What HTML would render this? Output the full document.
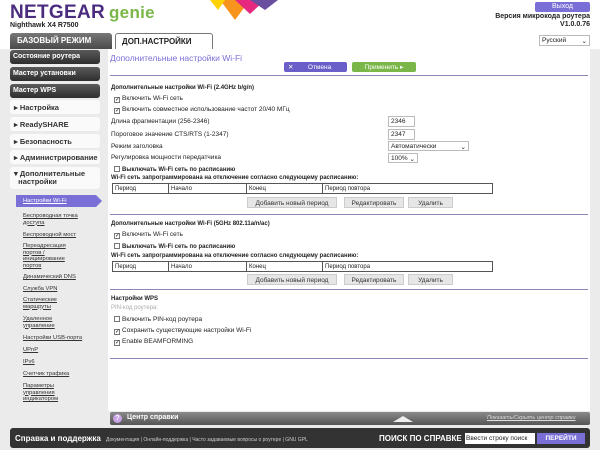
<!DOCTYPE html>
<html><head><meta charset="utf-8"><style>
*{margin:0;padding:0;box-sizing:border-box}
body{width:600px;height:450px;overflow:hidden;background:#ebebeb;font-family:"Liberation Sans",sans-serif;font-size:6.5px;color:#222;position:relative}
.a{position:absolute;white-space:nowrap}
.dk{position:absolute;left:10px;width:90px;height:14px;background:linear-gradient(#5a5a5a,#2e2e2e);border-radius:3px;color:#fff;font-weight:bold;font-size:7px;padding:3px 0 0 3px}
.lt{position:absolute;left:10px;width:90px;height:14px;background:#fafafa;border-radius:3px;color:#333;font-weight:bold;font-size:7.5px;padding:3px 0 0 4px}
.sub{position:absolute;left:23px;color:#333;font-size:5.8px;text-decoration:underline;line-height:6.6px}
.cb{display:inline-block;width:6px;height:6px;border:1px solid #777;background:#fff;vertical-align:-1px;margin-right:2px;font-size:6px;line-height:4px;text-align:center}
.sep{position:absolute;left:110px;width:478px;height:1px;background:#8b87b8}
.tb{position:absolute;left:112px;width:381px;height:11px;border:1px solid #555;display:flex}
.tb div{border-right:1px solid #555;padding:2px 0 0 2px;font-size:6px}
.btn{position:absolute;height:11px;background:#e6e6e6;border:1px solid #ccc;font-size:6.5px;text-align:center;padding-top:1.5px;color:#333}
.inp{position:absolute;background:#fff;border:1px solid #bbb;font-size:6.5px;padding:1px 2px;height:10px}
</style></head><body>
<div class="a" style="left:0;top:0;width:600px;height:49px;background:#fff"></div>
<div class="a" style="left:10px;top:2px;font-size:19px;font-weight:bold;color:#4b2c7e;letter-spacing:0.3px">NETGEAR<span style="color:#7ab648;font-size:17px;margin-left:4px">genie</span></div>
<svg class="a" style="left:210px;top:0" width="70" height="22"><polygon points="10,0 40,0 25,20" fill="#f7941d"/><polygon points="25,0 55,0 40,14" fill="#e6287f"/><polygon points="40,0 68,0 55,10" fill="#6a4ea0"/><polygon points="0,0 15,0 8,10" fill="#ffd200"/></svg>
<div class="a" style="left:10px;top:22px;font-size:7px;font-weight:bold">Nighthawk X4 R7500</div>
<div class="a" style="left:10px;top:33px;width:102px;height:16px;background:linear-gradient(#777,#4a4a4a);border-radius:3px 3px 0 0;color:#fff;font-weight:bold;font-size:8px;padding:3px 0 0 7px">БАЗОВЫЙ РЕЖИМ</div>
<div class="a" style="left:115px;top:33px;width:98px;height:16px;background:#fff;border:1px solid #777;border-bottom:none;border-radius:3px 3px 0 0;font-weight:bold;font-size:8px;padding:3px 0 0 6px">ДОП.НАСТРОЙКИ</div>
<div class="a" style="left:535px;top:2px;width:55px;height:10px;background:#7a6fd6;border-radius:2px;color:#fff;font-size:7px;text-align:center;padding-top:1px">Выход</div>
<div class="a" style="right:10px;top:13px;font-size:7px;font-weight:bold;text-align:right;line-height:8px">Версия микрокода роутера<br>V1.0.0.76</div>
<div class="a" style="left:539px;top:35px;width:51px;height:11px;background:#fff;border:1px solid #bbb;font-size:6.5px;padding:1px 2px">Русский<span style="float:right">⌄</span></div>

<div class="dk" style="top:50px">Состояние роутера</div>
<div class="dk" style="top:67px">Мастер установки</div>
<div class="dk" style="top:84px">Мастер WPS</div>
<div class="lt" style="top:100px">▸ Настройка</div>
<div class="lt" style="top:117px">▸ ReadySHARE</div>
<div class="lt" style="top:134px">▸ Безопасность</div>
<div class="lt" style="top:150px">▸ Администрирование</div>
<div class="lt" style="top:167px;height:22px;line-height:8px">▾ Дополнительные<br>&nbsp;&nbsp;настройки</div>
<svg class="a" style="left:16px;top:195px" width="86" height="12"><polygon points="0,0 80,0 86,6 80,12 0,12" fill="#7a6fd6"/></svg>
<div class="sub" style="top:198px;color:#fff">Настройки Wi-Fi</div>
<div class="sub" style="top:213px">Беспроводная точка<br>доступа</div>
<div class="sub" style="top:232px">Беспроводной мост</div>
<div class="sub" style="top:243px">Переадресация<br>портов /<br>инициирование<br>портов</div>
<div class="sub" style="top:274px">Динамический DNS</div>
<div class="sub" style="top:286px">Служба VPN</div>
<div class="sub" style="top:297px">Статические<br>маршруты</div>
<div class="sub" style="top:316px">Удаленное<br>управление</div>
<div class="sub" style="top:335px">Настройки USB-порта</div>
<div class="sub" style="top:347px">UPnP</div>
<div class="sub" style="top:359px">IPv6</div>
<div class="sub" style="top:371px">Счетчик трафика</div>
<div class="sub" style="top:383px">Параметры<br>управления<br>индикатором</div>

<div class="a" style="left:108px;top:49px;width:482px;height:362px;background:#fff"></div>
<div class="a" style="left:110px;top:53px;font-size:8.5px;color:#7a6fd6">Дополнительные настройки Wi-Fi</div>
<div class="a" style="left:284px;top:62px;width:63px;height:10px;background:#6a5fc8;border-radius:2px;color:#fff;font-size:6.5px;padding:1px 0 0 4px">✕ &nbsp;&nbsp;&nbsp;&nbsp;&nbsp;&nbsp;&nbsp;Отмена</div>
<div class="a" style="left:352px;top:62px;width:64px;height:10px;background:#7ab648;border-radius:2px;color:#fff;font-size:6.5px;text-align:center;padding-top:1px">Применить ▸</div>
<div class="sep" style="top:75px"></div>

<div class="a" style="left:111px;top:85px;font-weight:bold;font-size:6px">Дополнительные настройки Wi-Fi (2.4GHz b/g/n)</div>
<div class="a" style="left:114px;top:95px"><span class="cb">✓</span>Включить Wi-Fi сеть</div>
<div class="a" style="left:114px;top:106px"><span class="cb">✓</span>Включить совместное использование частот 20/40 МГц</div>
<div class="a" style="left:111px;top:118px">Длина фрагментации (256-2346)</div>
<div class="a" style="left:111px;top:131px">Пороговое значение CTS/RTS (1-2347)</div>
<div class="a" style="left:111px;top:143px">Режим заголовка</div>
<div class="a" style="left:111px;top:154px">Регулировка мощности передатчика</div>
<div class="inp" style="left:388px;top:116px;width:27px;height:11px">2346</div>
<div class="inp" style="left:388px;top:129px;width:27px;height:11px">2347</div>
<div class="inp" style="left:388px;top:141px;width:81px">Автоматически<span style="float:right">⌄</span></div>
<div class="inp" style="left:388px;top:153px;width:30px">100%<span style="float:right">⌄</span></div>
<div class="a" style="left:114px;top:166px;font-weight:bold;font-size:6px"><span class="cb"></span>Выключать Wi-Fi сеть по расписанию</div>
<div class="a" style="left:111px;top:175px;font-weight:bold;font-size:6px">Wi-Fi сеть запрограммирована на отключение согласно следующему расписанию:</div>
<div class="tb" style="top:183px"><div style="width:56px">Период</div><div style="width:78px">Начало</div><div style="width:76px">Конец</div><div style="flex:1;border:none">Период повтора</div></div>
<div class="btn" style="left:247px;top:197px;width:90px">Добавить новый период</div>
<div class="btn" style="left:344px;top:197px;width:60px">Редактировать</div>
<div class="btn" style="left:408px;top:197px;width:45px">Удалить</div>
<div class="sep" style="top:214px"></div>

<div class="a" style="left:111px;top:221px;font-weight:bold;font-size:6px">Дополнительные настройки Wi-Fi (5GHz 802.11a/n/ac)</div>
<div class="a" style="left:114px;top:231px"><span class="cb">✓</span>Включить Wi-Fi сеть</div>
<div class="a" style="left:114px;top:243px;font-weight:bold;font-size:6px"><span class="cb"></span>Выключать Wi-Fi сеть по расписанию</div>
<div class="a" style="left:111px;top:253px;font-weight:bold;font-size:6px">Wi-Fi сеть запрограммирована на отключение согласно следующему расписанию:</div>
<div class="tb" style="top:261px"><div style="width:56px">Период</div><div style="width:78px">Начало</div><div style="width:76px">Конец</div><div style="flex:1;border:none">Период повтора</div></div>
<div class="btn" style="left:247px;top:274px;width:90px">Добавить новый период</div>
<div class="btn" style="left:344px;top:274px;width:60px">Редактировать</div>
<div class="btn" style="left:408px;top:274px;width:45px">Удалить</div>
<div class="sep" style="top:289px"></div>

<div class="a" style="left:111px;top:296px;font-weight:bold;font-size:6px">Настройки WPS</div>
<div class="a" style="left:111px;top:305px;color:#aaa;font-size:6px">PIN-код роутера:</div>
<div class="a" style="left:114px;top:316px"><span class="cb"></span>Включить PIN-код роутера</div>
<div class="a" style="left:114px;top:327px"><span class="cb">✓</span>Сохранить существующие настройки Wi-Fi</div>
<div class="a" style="left:114px;top:338px"><span class="cb">✓</span>Enable BEAMFORMING</div>
<div class="sep" style="top:358px"></div>

<div class="a" style="left:110px;top:412px;width:480px;height:13px;background:linear-gradient(#8a8a8a,#555);border-radius:2px"></div>
<div class="a" style="left:113px;top:414px;width:9px;height:9px;border-radius:50%;background:#c9a3e6;color:#fff;font-size:7px;font-weight:bold;text-align:center;line-height:9px">?</div>
<div class="a" style="left:127px;top:414px;color:#fff;font-weight:bold;font-size:7px">Центр справки</div>
<svg class="a" style="left:393px;top:415px" width="20" height="8"><polygon points="0,7 10,1 20,7" fill="#eee"/></svg>
<div class="a" style="left:487px;top:415px;color:#ddd;font-size:5.5px;text-decoration:underline;font-style:italic">Показать/Скрыть центр справки</div>

<div class="a" style="left:10px;top:428px;width:580px;height:20px;background:#333;border-radius:3px"></div>
<div class="a" style="left:15px;top:434px;color:#fff;font-weight:bold;font-size:8px">Справка и поддержка</div>
<div class="a" style="left:106px;top:437px;color:#ccc;font-size:5px">Документация | Онлайн-поддержка | Часто задаваемые вопросы о роутере | GNU GPL</div>
<div class="a" style="left:379px;top:434px;color:#fff;font-weight:bold;font-size:8px">ПОИСК ПО СПРАВКЕ</div>
<div class="a" style="left:465px;top:433px;width:70px;height:11px;background:#fff;font-size:6.5px;padding:2px 1px">Ввести строку поиск</div>
<div class="a" style="left:537px;top:433px;width:48px;height:11px;background:#7a6fd6;color:#fff;font-weight:bold;font-size:6.5px;text-align:center;padding-top:2px">ПЕРЕЙТИ</div>
</body></html>
